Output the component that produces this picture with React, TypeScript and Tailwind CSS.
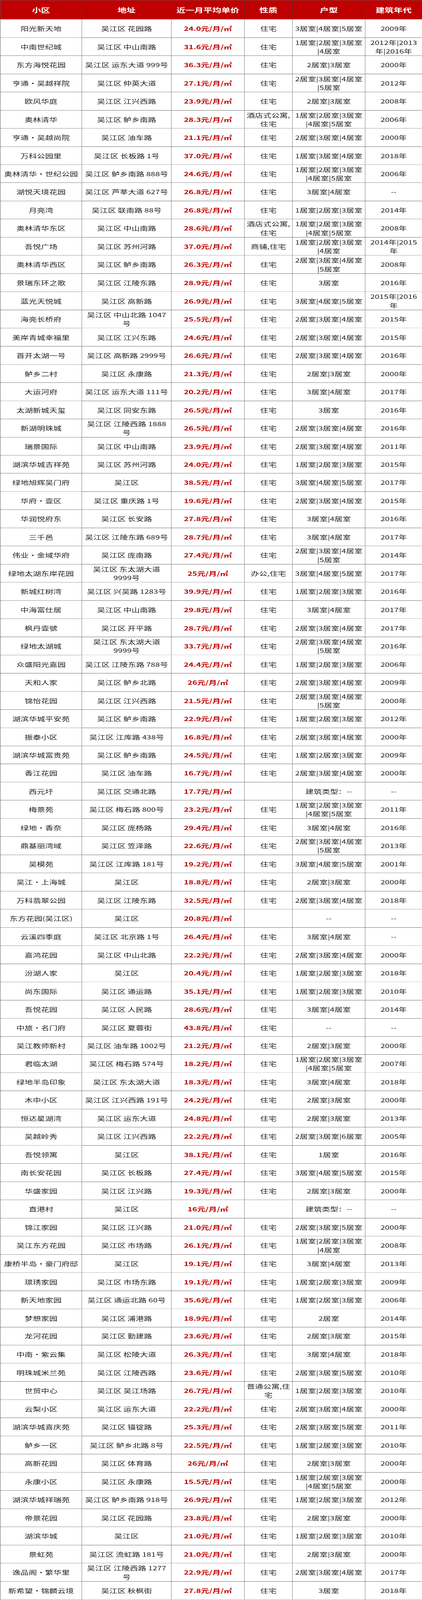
import React from "react";

type Row = [string, string, string, string, string, string];

const rows: Row[] = [
  ["阳光新天地", "吴江区 花园路", "24.0", "住宅", "3居室|4居室|5居室", "2009年"],
  ["中南世纪城", "吴江区 中山南路", "31.6", "住宅", "1居室|2居室|3居室\n|4居室", "2012年|2013\n年|2016年"],
  ["东方海悦花园", "吴江区 运东大道 999号", "36.3", "住宅", "2居室|3居室", "2000年"],
  ["亨通·吴越祥院", "吴江区 仲英大道", "27.1", "住宅", "2居室|3居室|4居室\n|5居室", "2012年"],
  ["欧风华庭", "吴江区 江兴西路", "23.9", "住宅", "2居室|3居室", "2008年"],
  ["奥林清华", "吴江区 鲈乡南路", "28.3", "酒店式公寓,\n住宅", "1居室|2居室|3居室\n|4居室|5居室", "2006年"],
  ["亨通·吴越尚院", "吴江区 油车路", "21.1", "住宅", "2居室|3居室|4居室", "2000年"],
  ["万科公园里", "吴江区 长板路 1号", "37.0", "住宅", "1居室|3居室|4居室", "2018年"],
  ["奥林清华·世纪公园", "吴江区 鲈乡南路 888号", "24.6", "住宅", "1居室|2居室|3居室\n|4居室|5居室", "2006年"],
  ["湖悦天境花园", "吴江区 芦莘大道 627号", "26.8", "住宅", "3居室|4居室", "--"],
  ["月亮湾", "吴江区 联南路 88号", "26.8", "住宅", "1居室|2居室|3居室", "2014年"],
  ["奥林清华东区", "吴江区 中山南路", "28.6", "酒店式公寓,\n住宅", "1居室|2居室|3居室\n|4居室|5居室", "2008年"],
  ["吾悦广场", "吴江区 苏州河路", "37.0", "商铺,住宅", "1居室|2居室|3居室\n|4居室", "2014年|2015\n年"],
  ["奥林清华西区", "吴江区 鲈乡南路", "26.3", "住宅", "2居室|3居室|4居室\n|5居室", "2008年"],
  ["景瑞东环之歌", "吴江区 江陵东路", "28.9", "住宅", "3居室", "2016年"],
  ["蓝光天悦城", "吴江区 高新路", "26.9", "住宅", "3居室|4居室|5居室", "2015年|2016\n年"],
  ["海亮长桥府", "吴江区 中山北路 1047\n号", "25.5", "住宅", "2居室|3居室|4居室", "2015年"],
  ["美岸青城幸福里", "吴江区 江兴东路", "24.6", "住宅", "2居室|3居室|4居室", "2015年"],
  ["首开太湖一号", "吴江区 高新路 2999号", "26.6", "住宅", "2居室|3居室|4居室", "2016年"],
  ["鲈乡二村", "吴江区 永康路", "21.3", "住宅", "2居室|3居室", "2000年"],
  ["大运河府", "吴江区 运东大道 111号", "20.2", "住宅", "3居室|4居室", "2017年"],
  ["太湖新城天玺", "吴江区 同安东路", "26.5", "住宅", "3居室", "2016年"],
  ["新湖明珠城", "吴江区 江陵西路 1888\n号", "26.5", "住宅", "2居室|3居室|4居室", "2016年"],
  ["瑞景国际", "吴江区 中山南路", "23.9", "住宅", "2居室|3居室|4居室", "2011年"],
  ["湖滨华城吉祥苑", "吴江区 苏州河路", "24.0", "住宅", "1居室|2居室|3居室", "2015年"],
  ["绿地旭辉吴门府", "吴江区", "38.5", "住宅", "3居室|4居室|5居室", "2017年"],
  ["华府·壹区", "吴江区 重庆路 1号", "19.6", "住宅", "2居室|3居室|4居室", "2015年"],
  ["华润悦府东", "吴江区 长安路", "27.8", "住宅", "3居室|4居室", "2016年"],
  ["三千邑", "吴江区 江陵东路 689号", "28.7", "住宅", "3居室|4居室", "2017年"],
  ["伟业·金域华府", "吴江区 庞南路", "27.4", "住宅", "2居室|3居室|4居室\n|5居室", "2014年"],
  ["绿地太湖东岸花园", "吴江区 东太湖大道\n9999号", "25", "办公,住宅", "3居室|4居室|5居室", "2017年"],
  ["新城红树湾", "吴江区 兴吴路 1283号", "39.9", "住宅", "1居室|2居室|3居室", "2016年"],
  ["中海富仕居", "吴江区 中山南路", "29.8", "住宅", "3居室|4居室", "2017年"],
  ["枫丹壹號", "吴江区 开平路", "28.7", "住宅", "2居室|3居室|4居室", "2017年"],
  ["绿地太湖城", "吴江区 东太湖大道\n9999号", "33.7", "住宅", "2居室|3居室|4居室\n|5居室", "2016年"],
  ["众盛阳光嘉园", "吴江区 江陵东路 788号", "24.4", "住宅", "1居室|2居室|3居室", "2006年"],
  ["天和人家", "吴江区 鲈乡北路", "26", "住宅", "2居室|3居室|4居室", "2009年"],
  ["锦怡花园", "吴江区 江兴西路", "21.5", "住宅", "2居室|3居室|4居室\n|5居室", "2000年"],
  ["湖滨华城平安苑", "吴江区 鲈乡南路", "22.9", "住宅", "1居室|2居室|3居室", "2012年"],
  ["振泰小区", "吴江区 江库路 438号", "16.8", "住宅", "2居室|3居室|4居室", "2000年"],
  ["湖滨华城富贵苑", "吴江区 鲈乡南路", "24.5", "住宅", "1居室|2居室|3居室", "2009年"],
  ["香江花园", "吴江区 油车路", "16.7", "住宅", "2居室|3居室|4居室", "2000年"],
  ["西元圩", "吴江区 交通北路", "17.7", "", "建筑类型：--", "--"],
  ["梅景苑", "吴江区 梅石路 800号", "23.2", "住宅", "1居室|2居室|3居室\n|4居室|5居室", "2011年"],
  ["绿地·香奈", "吴江区 庞杨路", "29.4", "住宅", "3居室|4居室", "2016年"],
  ["鼎基丽湾域", "吴江区 笠泽路", "22.6", "住宅", "2居室|3居室|4居室\n|5居室", "2013年"],
  ["吴模苑", "吴江区 江库路 181号", "19.2", "住宅", "3居室|4居室|5居室", "2001年"],
  ["吴江·上海城", "吴江区", "18.8", "住宅", "2居室|3居室", "2000年"],
  ["万科翡翠公园", "吴江区 江陵东路", "32.5", "住宅", "2居室|3居室|4居室", "2018年"],
  ["东方花园(吴江区)", "吴江区", "20.8", "", "--", "--"],
  ["云溪四季庭", "吴江区 北京路 1号", "26.4", "住宅", "3居室|4居室", "--"],
  ["嘉鸿花园", "吴江区 中山北路", "22.2", "住宅", "2居室|3居室|4居室", "2000年"],
  ["汾湖人家", "吴江区", "20.4", "住宅", "1居室|2居室|3居室", "2018年"],
  ["尚东国际", "吴江区 通运路", "35.1", "住宅", "1居室|2居室|3居室", "2010年"],
  ["吾悦花园", "吴江区 人民路", "28.6", "住宅", "3居室|4居室", "2014年"],
  ["中旅·名门府", "吴江区 夏蓉街", "43.8", "住宅", "--", "--"],
  ["吴江教师新村", "吴江区 油车路 1002号", "21.2", "住宅", "2居室|3居室", "2000年"],
  ["君临太湖", "吴江区 梅石路 574号", "18.2", "住宅", "1居室|2居室|3居室\n|4居室|5居室", "2007年"],
  ["绿地半岛印象", "吴江区 东太湖大道", "18.3", "住宅", "3居室|4居室", "2018年"],
  ["木中小区", "吴江区 江兴西路 191号", "24.2", "住宅", "2居室|3居室", "2000年"],
  ["恒达星湖湾", "吴江区 运东大道", "24.8", "住宅", "2居室|3居室", "2013年"],
  ["吴越岭秀", "吴江区 江兴西路", "22.2", "住宅", "2居室|3居室|6居室", "2005年"],
  ["吾悦领寓", "吴江区", "38.1", "住宅", "1居室", "2016年"],
  ["南长安花园", "吴江区 长板路", "27.4", "住宅", "3居室|4居室|5居室", "2015年"],
  ["华盛家园", "吴江区 江兴路", "19.3", "住宅", "2居室|3居室", "2000年"],
  ["直港村", "吴江区", "16", "", "建筑类型：--", "--"],
  ["锦江家园", "吴江区 江兴路", "21.0", "住宅", "2居室|3居室|5居室", "2000年"],
  ["吴江东方花园", "吴江区 市场路", "26.1", "住宅", "1居室|2居室|3居室\n|4居室", "2008年"],
  ["康桥半岛·豪门府邸", "吴江区", "19.1", "住宅", "3居室|4居室", "2013年"],
  ["璟琇家园", "吴江区 市场东路", "19.1", "住宅", "1居室|2居室|3居室", "2009年"],
  ["新天地家园", "吴江区 通运北路 60号", "35.6", "住宅", "1居室|2居室|3居室", "2006年"],
  ["梦想家园", "吴江区 浦港路", "18.9", "住宅", "2居室", "2014年"],
  ["龙河花园", "吴江区 勤建路", "23.6", "住宅", "2居室|3居室", "2015年"],
  ["中南·紫云集", "吴江区 松陵大道", "26.3", "住宅", "3居室|4居室", "2018年"],
  ["明珠城米兰苑", "吴江区 江陵西路", "23.6", "住宅", "2居室|3居室|5居室", "2010年"],
  ["世贸中心", "吴江区 吴江场路", "26.7", "普通公寓,住\n宅", "1居室|2居室|3居室", "2010年"],
  ["云梨小区", "吴江区 运东大道", "22.2", "住宅", "2居室|3居室|4居室", "2000年"],
  ["湖滨华城喜庆苑", "吴江区 锚锭路", "25.3", "住宅", "2居室|3居室|5居室", "2011年"],
  ["鲈乡一区", "吴江区 鲈乡北路 8号", "22.5", "住宅", "1居室|2居室|3居室", "2010年"],
  ["高新花园", "吴江区 体育路", "26", "住宅", "2居室|3居室", "2000年"],
  ["永康小区", "吴江区 永康路", "15.5", "住宅", "1居室|2居室|3居室\n|4居室|5居室", "2000年"],
  ["湖滨华城祥瑞苑", "吴江区 鲈乡南路 918号", "26.9", "住宅", "1居室|2居室|3居室", "2012年"],
  ["帝景花园", "吴江区 花园路", "23.8", "住宅", "2居室|3居室", "2000年"],
  ["湖滨华城", "吴江区", "21.0", "住宅", "1居室|2居室|3居室", "2010年"],
  ["景虹苑", "吴江区 流虹路 181号", "21.0", "住宅", "2居室|3居室", "2000年"],
  ["逸品阁·繁华里", "吴江区 江陵西路 1277\n号", "22.9", "住宅", "2居室|3居室|4居室", "2017年"],
  ["新希望·锦麟云境", "吴江区 秋枫街", "27.8", "住宅", "3居室", "2018年"],
];

const headers = ["小区", "地址", "近一月平均单价", "性质", "户型", "建筑年代"];
const widths = ["w-[209px]", "w-[229px]", "w-[187px]", "w-[123px]", "w-[186px]", "w-[146px]"];

function Lines({ text, price }: { text: string; price?: boolean }) {
  const parts = text.split("\n");
  return (
    <div className="flex flex-col items-center">
      {parts.map((p, i) => (
        <div
          key={i}
          className={
            price
              ? "h-[32px] leading-[32px] text-[21px] font-bold text-[#c00000] whitespace-nowrap"
              : "h-[32px] leading-[32px] text-[21px] text-[#1a1a1a] whitespace-nowrap"
          }
        >
          {p}
        </div>
      ))}
    </div>
  );
}

export default function App() {
  return (
    <div className="w-[1080px] h-[4096px] overflow-hidden bg-white">
      <div className="w-[1080px] h-[5897px] origin-top scale-y-[0.6946] font-['Noto_Sans_CJK_SC','Noto_Sans',sans-serif]">
        <div className="border-t border-l border-t-[#222] border-l-[#555]">
          <div className="flex h-[71px] bg-[#c00000]">
            {headers.map((h, i) => (
              <div
                key={h}
                className={`${widths[i]} shrink-0 flex items-center justify-center border-r border-b border-r-[#3a3a3a] border-b-[#d9d9d9]`}
              >
                <span className="text-[23px] leading-[32px] font-bold text-white whitespace-nowrap">{h}</span>
              </div>
            ))}
          </div>
          {rows.map((r, ri) => (
            <div key={ri} className="flex h-[66.95px] overflow-hidden">
              {r.map((c, ci) => (
                <div
                  key={ci}
                  className={`${widths[ci]} shrink-0 h-full flex items-center justify-center overflow-hidden border-r border-b border-r-[#7a7a7a] border-b-[#2e2e2e]`}
                >
                  {ci === 2 ? <Lines text={`${c}元/月/㎡`} price /> : c ? <Lines text={c} /> : null}
                </div>
              ))}
            </div>
          ))}
        </div>
      </div>
    </div>
  );
}
